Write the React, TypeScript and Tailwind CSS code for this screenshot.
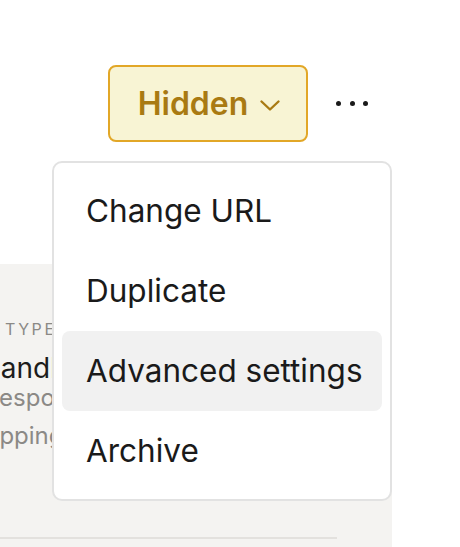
const menuItems = ["Change URL", "Duplicate", "Advanced settings", "Archive"];

function Chevron() {
  return (
    <svg width="22" height="13" viewBox="0 0 22 13" fill="none" className="mt-[4px]">
      <path
        d="M2.5 2.5 L11 10.5 L19.5 2.5"
        stroke="currentColor"
        strokeWidth="2.4"
        strokeLinecap="round"
        strokeLinejoin="round"
      />
    </svg>
  );
}

export default function App() {
  const active = 2;

  return (
    <div className="relative h-[547px] w-[460px] overflow-hidden bg-white font-['Inter',sans-serif]">
      {/* top bar */}
      <div className="flex items-center gap-[28px] pl-[108px] pt-[65px]">
        <button className="flex h-[77px] w-[200px] items-center justify-center gap-[11px] rounded-[8px] border-2 border-[#e2a727] bg-[#f8f4d4] pl-[3px] text-[32px] font-semibold text-[#a97a12]">
          <span>Hidden</span>
          <Chevron />
        </button>
        <div className="flex items-center gap-[8.5px]">
          <span className="h-[5px] w-[5px] rounded-full bg-[#1a1a1a]" />
          <span className="h-[5px] w-[5px] rounded-full bg-[#1a1a1a]" />
          <span className="h-[5px] w-[5px] rounded-full bg-[#1a1a1a]" />
        </div>
      </div>

      {/* panel behind the menu */}
      <div className="mt-[122px] flex h-[283px] w-[392px] flex-col overflow-hidden bg-[#f4f3f1] pt-[55px]">
        <div className="pl-[5px] text-[16px] leading-[20px] tracking-[0.16em] text-[#8b8986] uppercase">
          Type
        </div>
        <div className="mt-[13px] -ml-[20px] text-[28px] leading-[32px] text-[#1c1c1c]">
          Handle
        </div>
        <div className="-mt-[5px] -ml-[16px] text-[24px] leading-[38px] text-[#8b8986]">
          Responds
        </div>
        <div className="-ml-[36px] text-[24px] leading-[38px] text-[#8b8986]">
          Shipping
        </div>
        <div className="mt-[82px] h-[2px] w-[337px] bg-[#e3e1de]" />
      </div>

      {/* dropdown menu */}
      <div className="absolute left-[52px] top-[161px] flex w-[340px] flex-col rounded-[10px] border-2 border-[#e2e2e2] bg-white p-2">
        {menuItems.map((item, i) => (
          <div
            key={item}
            className={
              i === active
                ? "flex h-[80px] items-center rounded-[8px] bg-[#f1f1f1] px-6 text-[31.5px] whitespace-nowrap text-[#1a1a1a]"
                : "flex h-[80px] items-center rounded-[8px] px-6 text-[31.5px] whitespace-nowrap text-[#1a1a1a]"
            }
          >
            {item}
          </div>
        ))}
      </div>
    </div>
  );
}
